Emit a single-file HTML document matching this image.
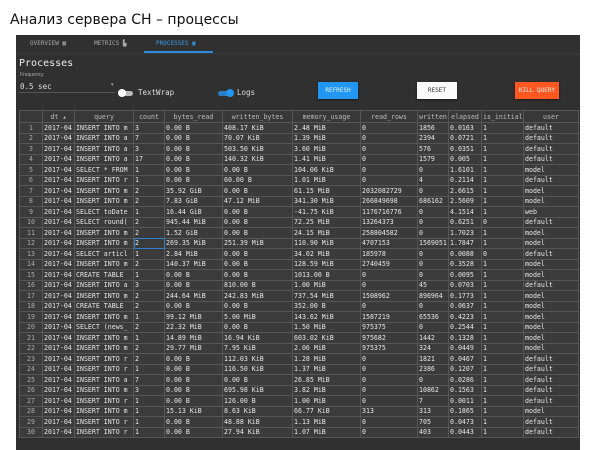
<!DOCTYPE html>
<html><head><meta charset="utf-8"><style>
*{margin:0;padding:0;box-sizing:border-box}
body{width:600px;height:450px;background:#fff;position:relative;overflow:hidden;font-family:"Liberation Sans","DejaVu Sans",sans-serif}
.t{position:absolute;left:10px;top:12px;font-size:14px;color:#111;font-family:"DejaVu Sans",sans-serif}
.p{position:absolute;left:16px;top:35px;width:564px;height:415px;background:#303030}
.tab{position:absolute;top:40px;font-size:6px;font-family:"DejaVu Sans Mono",monospace;color:#aaa}
.btn{position:absolute;top:82px;height:17px;font-size:6px;font-family:"DejaVu Sans Mono",monospace;text-align:center;line-height:17px;box-shadow:0 1px 2px rgba(0,0,0,.5)}
table{position:absolute;left:19px;top:110px;width:559px;border-collapse:collapse;table-layout:fixed;font-family:"DejaVu Sans Mono","Liberation Mono",monospace;font-size:6.6px;color:#e6e6e6}
tr{height:10.5px}
td,th{border:1px solid #565656;line-height:8px;padding:0 1px;white-space:nowrap;overflow:hidden;background:#3b3b3b;text-align:left}
tr:first-child{height:12px}
th{font-weight:normal;text-align:center;color:#bbb;background:#383838}
td:first-child{text-align:center;color:#aaa}
</style></head><body>
<div class="t">Анализ сервера CH – процессы</div>
<div class="p"></div>
<div class="tab" style="left:30px">OVERVIEW ▦</div>
<div class="tab" style="left:94px">METRICS ▙</div>
<div class="tab" style="left:156px;color:#3a9ee8">PROCESSES ▣</div>
<div style="position:absolute;left:144px;top:51px;width:69px;height:2px;background:#2a8ee0"></div>
<div style="position:absolute;left:16px;top:53px;width:564px;height:1px;background:#3a3a3a"></div>
<div style="position:absolute;left:19px;top:58px;font-size:10px;color:#eee;font-family:'DejaVu Sans Mono',monospace">Processes</div>
<div style="position:absolute;left:20px;top:72px;font-size:5px;color:#aaa">Frequency</div>
<div style="position:absolute;left:20px;top:82px;font-size:7.5px;color:#ddd;font-family:'DejaVu Sans Mono',monospace">0.5 sec</div>
<div style="position:absolute;left:111px;top:82px;font-size:5px;color:#aaa">▾</div>
<div style="position:absolute;left:19px;top:92px;width:96px;height:1px;background:#555"></div>
<div style="position:absolute;left:120px;top:91px;width:13px;height:5px;border-radius:3px;background:#bbb"></div>
<div style="position:absolute;left:118px;top:89px;width:8px;height:8px;border-radius:50%;background:#fff"></div>
<div style="position:absolute;left:138px;top:88px;font-size:7.5px;color:#ddd;font-family:'DejaVu Sans Mono',monospace">TextWrap</div>
<div style="position:absolute;left:218px;top:91px;width:13px;height:5px;border-radius:3px;background:#2a7fc8"></div>
<div style="position:absolute;left:226px;top:89px;width:8px;height:8px;border-radius:50%;background:#2196f3"></div>
<div style="position:absolute;left:237px;top:88px;font-size:7.5px;color:#ddd;font-family:'DejaVu Sans Mono',monospace">Logs</div>
<div class="btn" style="left:318px;width:40px;background:#2196f3;color:#e8f4ff">REFRESH</div>
<div class="btn" style="left:417px;width:40px;background:#fafafa;color:#333">RESET</div>
<div class="btn" style="left:515px;width:44px;background:#ff5722;color:#fff3ee">KILL QUERY</div>
<table>
<colgroup><col style="width:23px"><col style="width:32px"><col style="width:59px"><col style="width:31px"><col style="width:58px"><col style="width:70px"><col style="width:68px"><col style="width:57px"><col style="width:31px"><col style="width:33px"><col style="width:42px"><col style="width:55px"></colgroup>
<tr><th></th><th>dt ▴</th><th>query</th><th>count</th><th>bytes_read</th><th>written_bytes</th><th>memory_usage</th><th>read_rows</th><th>written</th><th>elapsed</th><th>is_initial</th><th>user</th></tr>
<tr><td>1</td><td>2017-04</td><td>INSERT INTO m</td><td>3</td><td>0.00 B</td><td>408.17 KiB</td><td>2.48 MiB</td><td>0</td><td>1856</td><td>0.0163</td><td>1</td><td>default</td></tr>
<tr><td>2</td><td>2017-04</td><td>INSERT INTO a</td><td>7</td><td>0.00 B</td><td>70.07 KiB</td><td>1.39 MiB</td><td>0</td><td>2394</td><td>0.0721</td><td>1</td><td>default</td></tr>
<tr><td>3</td><td>2017-04</td><td>INSERT INTO a</td><td>3</td><td>0.00 B</td><td>503.50 KiB</td><td>3.60 MiB</td><td>0</td><td>576</td><td>0.0351</td><td>1</td><td>default</td></tr>
<tr><td>4</td><td>2017-04</td><td>INSERT INTO a</td><td>17</td><td>0.00 B</td><td>140.32 KiB</td><td>1.41 MiB</td><td>0</td><td>1579</td><td>0.005</td><td>1</td><td>default</td></tr>
<tr><td>5</td><td>2017-04</td><td>SELECT * FROM</td><td>1</td><td>0.00 B</td><td>0.00 B</td><td>104.06 KiB</td><td>0</td><td>0</td><td>1.6101</td><td>1</td><td>model</td></tr>
<tr><td>6</td><td>2017-04</td><td>INSERT INTO r</td><td>1</td><td>0.00 B</td><td>60.00 B</td><td>1.01 MiB</td><td>0</td><td>4</td><td>0.2114</td><td>1</td><td>default</td></tr>
<tr><td>7</td><td>2017-04</td><td>INSERT INTO m</td><td>2</td><td>35.92 GiB</td><td>0.00 B</td><td>61.15 MiB</td><td>2032082729</td><td>0</td><td>2.6615</td><td>1</td><td>model</td></tr>
<tr><td>8</td><td>2017-04</td><td>INSERT INTO m</td><td>2</td><td>7.83 GiB</td><td>47.12 MiB</td><td>341.30 MiB</td><td>266849698</td><td>686162</td><td>2.5609</td><td>1</td><td>model</td></tr>
<tr><td>9</td><td>2017-04</td><td>SELECT toDate</td><td>1</td><td>16.44 GiB</td><td>0.00 B</td><td>-41.75 KiB</td><td>1176716776</td><td>0</td><td>4.1514</td><td>1</td><td>web</td></tr>
<tr><td>10</td><td>2017-04</td><td>SELECT round(</td><td>2</td><td>945.44 MiB</td><td>0.00 B</td><td>72.25 MiB</td><td>13264373</td><td>0</td><td>0.6251</td><td>0</td><td>default</td></tr>
<tr><td>11</td><td>2017-04</td><td>INSERT INTO m</td><td>2</td><td>1.52 GiB</td><td>0.00 B</td><td>24.15 MiB</td><td>258804582</td><td>0</td><td>1.7023</td><td>1</td><td>model</td></tr>
<tr><td>12</td><td>2017-04</td><td>INSERT INTO m</td><td style="outline:1px solid #2f7fd0;outline-offset:-1px">2</td><td>269.35 MiB</td><td>251.39 MiB</td><td>110.90 MiB</td><td>4707153</td><td>1569051</td><td>1.7847</td><td>1</td><td>model</td></tr>
<tr><td>13</td><td>2017-04</td><td>SELECT articl</td><td>1</td><td>2.84 MiB</td><td>0.00 B</td><td>34.02 MiB</td><td>185978</td><td>0</td><td>0.0088</td><td>0</td><td>default</td></tr>
<tr><td>14</td><td>2017-04</td><td>INSERT INTO m</td><td>2</td><td>140.37 MiB</td><td>0.00 B</td><td>128.59 MiB</td><td>2740459</td><td>0</td><td>0.3528</td><td>1</td><td>model</td></tr>
<tr><td>15</td><td>2017-04</td><td>CREATE TABLE </td><td>1</td><td>0.00 B</td><td>0.00 B</td><td>1013.00 B</td><td>0</td><td>0</td><td>0.0095</td><td>1</td><td>model</td></tr>
<tr><td>16</td><td>2017-04</td><td>INSERT INTO a</td><td>3</td><td>0.00 B</td><td>810.00 B</td><td>1.00 MiB</td><td>0</td><td>45</td><td>0.0703</td><td>1</td><td>default</td></tr>
<tr><td>17</td><td>2017-04</td><td>INSERT INTO m</td><td>2</td><td>244.64 MiB</td><td>242.83 MiB</td><td>737.54 MiB</td><td>1508962</td><td>896964</td><td>0.1773</td><td>1</td><td>model</td></tr>
<tr><td>18</td><td>2017-04</td><td>CREATE TABLE </td><td>2</td><td>0.00 B</td><td>0.00 B</td><td>352.00 B</td><td>0</td><td>0</td><td>0.0637</td><td>1</td><td>model</td></tr>
<tr><td>19</td><td>2017-04</td><td>INSERT INTO m</td><td>1</td><td>99.12 MiB</td><td>5.00 MiB</td><td>143.62 MiB</td><td>1587219</td><td>65536</td><td>0.4223</td><td>1</td><td>model</td></tr>
<tr><td>20</td><td>2017-04</td><td>SELECT (news_</td><td>2</td><td>22.32 MiB</td><td>0.00 B</td><td>1.50 MiB</td><td>975375</td><td>0</td><td>0.2544</td><td>1</td><td>model</td></tr>
<tr><td>21</td><td>2017-04</td><td>INSERT INTO m</td><td>1</td><td>14.89 MiB</td><td>16.94 KiB</td><td>603.02 KiB</td><td>975682</td><td>1442</td><td>0.1328</td><td>1</td><td>model</td></tr>
<tr><td>22</td><td>2017-04</td><td>INSERT INTO m</td><td>2</td><td>29.77 MiB</td><td>7.95 KiB</td><td>2.06 MiB</td><td>975375</td><td>324</td><td>0.0449</td><td>1</td><td>model</td></tr>
<tr><td>23</td><td>2017-04</td><td>INSERT INTO r</td><td>2</td><td>0.00 B</td><td>112.03 KiB</td><td>1.28 MiB</td><td>0</td><td>1821</td><td>0.0467</td><td>1</td><td>default</td></tr>
<tr><td>24</td><td>2017-04</td><td>INSERT INTO r</td><td>1</td><td>0.00 B</td><td>116.50 KiB</td><td>1.37 MiB</td><td>0</td><td>2386</td><td>0.1207</td><td>1</td><td>default</td></tr>
<tr><td>25</td><td>2017-04</td><td>INSERT INTO a</td><td>7</td><td>0.00 B</td><td>0.00 B</td><td>26.85 MiB</td><td>0</td><td>0</td><td>0.0286</td><td>1</td><td>default</td></tr>
<tr><td>26</td><td>2017-04</td><td>INSERT INTO m</td><td>3</td><td>0.00 B</td><td>695.98 KiB</td><td>3.82 MiB</td><td>0</td><td>10862</td><td>0.1563</td><td>1</td><td>default</td></tr>
<tr><td>27</td><td>2017-04</td><td>INSERT INTO r</td><td>1</td><td>0.00 B</td><td>126.00 B</td><td>1.00 MiB</td><td>0</td><td>7</td><td>0.0011</td><td>1</td><td>default</td></tr>
<tr><td>28</td><td>2017-04</td><td>INSERT INTO m</td><td>1</td><td>15.13 KiB</td><td>8.63 KiB</td><td>66.77 KiB</td><td>313</td><td>313</td><td>0.1865</td><td>1</td><td>model</td></tr>
<tr><td>29</td><td>2017-04</td><td>INSERT INTO r</td><td>1</td><td>0.00 B</td><td>48.88 KiB</td><td>1.13 MiB</td><td>0</td><td>705</td><td>0.0473</td><td>1</td><td>default</td></tr>
<tr><td>30</td><td>2017-04</td><td>INSERT INTO r</td><td>1</td><td>0.00 B</td><td>27.94 KiB</td><td>1.07 MiB</td><td>0</td><td>403</td><td>0.0443</td><td>1</td><td>default</td></tr>
</table>
</body></html>
